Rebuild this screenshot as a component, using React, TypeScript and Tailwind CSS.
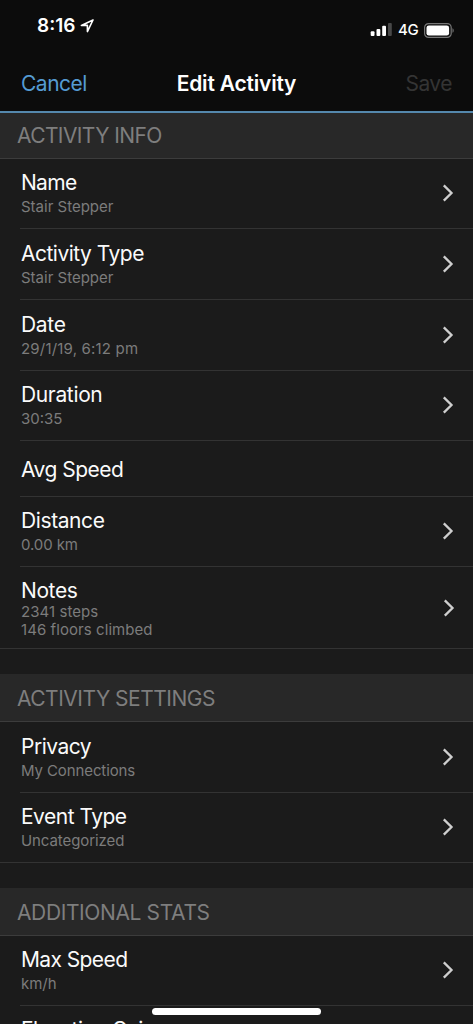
import React from 'react'
import clsx from 'clsx'

type RowProps = {
  title: string
  lines?: string[]
  height?: string
  arrow?: boolean
  last?: boolean
  titleClass?: string
  lineClass?: string
}

const Chevron = ({ className }: { className?: string }) => (
  <svg className={clsx('w-3 h-[18px] shrink-0', className)} viewBox="0 0 12 18" fill="none" stroke="#cfcfcf" strokeWidth="2.3">
    <path d="M1.8 1.4 9.5 9 1.8 16.6" />
  </svg>
)

const Row = ({
  title,
  lines = [],
  height = 'h-[70px]',
  arrow = true,
  last = false,
  titleClass = 'tracking-[-0.5px]',
  lineClass,
}: RowProps) => {
  const multi = lines.length > 1
  return (
    <div className={clsx('shrink-0', height, last ? 'border-b border-[#333333]' : 'pl-5')}>
      <div
        className={clsx(
          'h-full flex items-center justify-between pr-[19px]',
          last ? 'pl-[21px]' : 'pl-px border-b border-[#333333]'
        )}
      >
        <div className={clsx('whitespace-nowrap', lines.length === 1 ? 'pt-px' : 'pt-[2px]')}>
          <div className={clsx('text-[21px] text-[#fafafa]', multi ? 'leading-[24px]' : 'leading-[26px]', titleClass)}>{title}</div>
          {lines.map((line) => (
            <div
              key={line}
              className={clsx('text-[15px] text-[#7c7c7c]', multi ? 'leading-[18px]' : 'leading-[22px]', lineClass)}
            >
              {line}
            </div>
          ))}
        </div>
        {arrow && <Chevron className={multi ? 'ml-px -mr-px' : 'mb-px'} />}
      </div>
    </div>
  )
}

const SectionHeader = ({ title, className }: { title: string; className?: string }) => (
  <div
    className={clsx(
      'shrink-0 flex items-center border-b border-[#3c3c3c] bg-[#282828] pl-[17px] text-[21px] text-[#7e7e7e] whitespace-nowrap',
      className
    )}
  >
    {title}
  </div>
)

const StatusBar = () => (
  <div className="h-[56px] flex items-start justify-between pl-[37px] pr-[18px]">
    <div className="flex items-center pt-[13px]">
      <span className="text-[19px] leading-[26px] font-semibold">8:16</span>
      <svg className="ml-[5px] w-[14px] h-[14px]" viewBox="0 0 14 14" fill="none" stroke="white" strokeWidth="1.6" strokeLinejoin="round">
        <path d="M13 1 1.4 6.4H7.4V12.6Z" />
      </svg>
    </div>
    <div className="flex items-center pt-[20px]">
      <svg className="w-[23px] h-[14px]" viewBox="0 0 23 14" fill="white">
        <rect x="0.7" y="8.2" width="3.8" height="4.8" rx="1" />
        <rect x="6.5" y="6" width="3.8" height="7" rx="1" />
        <rect x="12.2" y="2.7" width="3.8" height="10.3" rx="1" />
        <rect x="18" y="0" width="3.8" height="13" rx="1" fill="#484848" />
      </svg>
      <span className="ml-[5px] w-[21px] text-[15px] leading-[20px] font-medium tracking-[-0.3px]">4G</span>
      <svg className="ml-[5px] w-[31px] h-[15px]" viewBox="0 0 31 15">
        <rect x="0.6" y="0.6" width="26.6" height="13.8" rx="4" fill="none" stroke="#777777" strokeWidth="1.2" />
        <rect x="2.5" y="2.4" width="22.6" height="10.2" rx="2.4" fill="white" />
        <path d="M28.5 5.2c1.6.6 1.6 4 0 4.6z" fill="#777777" />
      </svg>
    </div>
  </div>
)

const App = () => {
  return (
    <div className="relative w-[473px] h-[1024px] overflow-hidden flex flex-col bg-[#1b1b1b] text-white font-['Inter',sans-serif]">
      <div className="shrink-0 h-[113px] bg-[#0c0c0c] border-b-2 border-[#5588ad]">
        <StatusBar />
        <div className="grid grid-cols-3 items-center h-[55px] pl-[21px] pr-[21px] text-[21px] whitespace-nowrap">
          <span className="text-[#559bd3] tracking-[-0.5px]">Cancel</span>
          <span className="text-center font-semibold tracking-[-0.2px]">Edit Activity</span>
          <span className="text-right text-[#343434] tracking-[-0.5px]">Save</span>
        </div>
      </div>

      <SectionHeader title="ACTIVITY INFO" className="h-[46px] tracking-[-0.6px]" />
      <Row title="Name" lines={['Stair Stepper']} titleClass="tracking-[-0.7px]" />
      <Row title="Activity Type" lines={['Stair Stepper']} height="h-[71px]" />
      <Row title="Date" lines={['29/1/19, 6:12 pm']} height="h-[71px]" titleClass="tracking-[-0.3px]" lineClass="tracking-[0.18px]" />
      <Row title="Duration" lines={['30:35']} titleClass="tracking-[-0.35px]" />
      <Row title="Avg Speed" height="h-[56px]" arrow={false} />
      <Row title="Distance" lines={['0.00 km']} titleClass="tracking-[-0.4px]" lineClass="tracking-[-0.1px]" />
      <Row
        title="Notes"
        lines={['2341 steps', '146 floors climbed']}
        height="h-[82px]"
        titleClass="tracking-[-0.4px]"
        lineClass="tracking-[0.07px]"
        last
      />

      <SectionHeader title="ACTIVITY SETTINGS" className="mt-[25px] h-[48px] pt-[2px] tracking-[-0.5px]" />
      <Row title="Privacy" lines={['My Connections']} height="h-[71px]" lineClass="tracking-[-0.1px]" />
      <Row title="Event Type" lines={['Uncategorized']} lineClass="tracking-[-0.08px]" last />

      <SectionHeader title="ADDITIONAL STATS" className="mt-[25px] h-[48px] pt-[2px] tracking-[-0.38px]" />
      <Row title="Max Speed" lines={['km/h']} titleClass="tracking-[-0.6px]" />
      <Row title="Elevation Gain" lines={['m']} />

      <div className="absolute left-[152px] top-[1008px] w-[169px] h-[7px] rounded-full bg-white" />
    </div>
  )
}

export default App
